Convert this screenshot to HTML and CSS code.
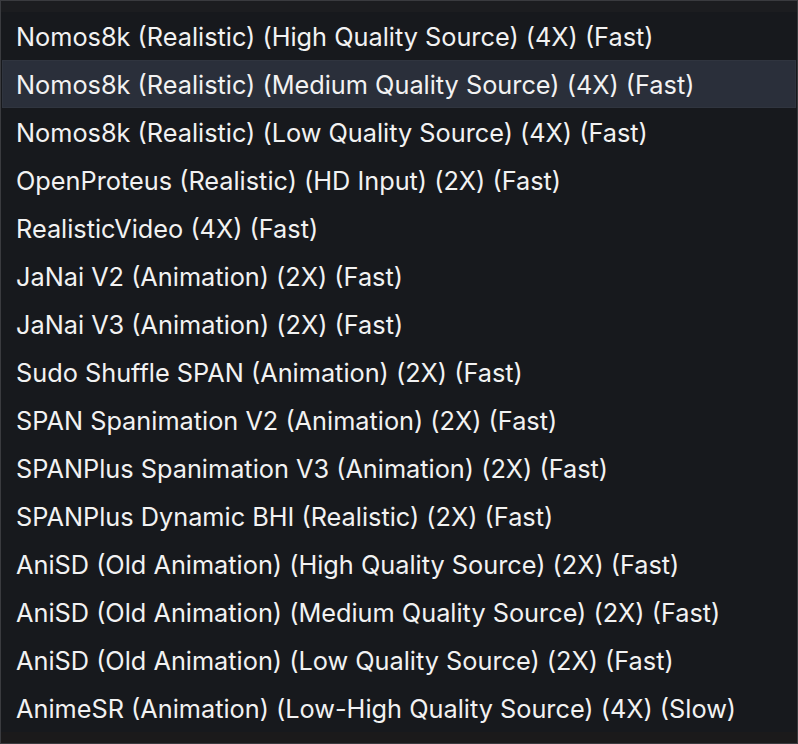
FILE: index.html
```html
<!DOCTYPE html>
<html>
<head>
<meta charset="utf-8">
<link rel="stylesheet" href="styles.css">
</head>
<body>
<div class="menu">
  <div class="pad-top"></div>
  <ul class="list">
    <li class="item">Nomos8k (Realistic) (High Quality Source) (4X) (Fast)</li>
    <li class="item active">Nomos8k (Realistic) (Medium Quality Source) (4X) (Fast)</li>
    <li class="item">Nomos8k (Realistic) (Low Quality Source) (4X) (Fast)</li>
    <li class="item">OpenProteus (Realistic) (HD Input) (2X) (Fast)</li>
    <li class="item">RealisticVideo (4X) (Fast)</li>
    <li class="item">JaNai V2 (Animation) (2X) (Fast)</li>
    <li class="item">JaNai V3 (Animation) (2X) (Fast)</li>
    <li class="item">Sudo Shuffle SPAN (Animation) (2X) (Fast)</li>
    <li class="item">SPAN Spanimation V2 (Animation) (2X) (Fast)</li>
    <li class="item">SPANPlus Spanimation V3 (Animation) (2X) (Fast)</li>
    <li class="item">SPANPlus Dynamic BHI (Realistic) (2X) (Fast)</li>
    <li class="item">AniSD (Old Animation) (High Quality Source) (2X) (Fast)</li>
    <li class="item">AniSD (Old Animation) (Medium Quality Source) (2X) (Fast)</li>
    <li class="item">AniSD (Old Animation) (Low Quality Source) (2X) (Fast)</li>
    <li class="item">AnimeSR (Animation) (Low-High Quality Source) (4X) (Slow)</li>
  </ul>
  <div class="pad-bottom"></div>
</div>
</body>
</html>
```
FILE: styles.css
```css
html, body {
  margin: 0;
  padding: 0;
  background: #17191d;
}
.menu {
  width: 798px;
  height: 744px;
  box-sizing: border-box;
  border: 1px solid #3a3b3f;
  background: #17191d;
  display: flex;
  flex-direction: column;
  font-family: Inter, "Noto Sans", sans-serif;
  color: #f2f2f2;
}
.pad-top {
  height: 11px;
  background: #1c1d20;
}
.list {
  list-style: none;
  margin: 0;
  padding: 0;
}
.item {
  height: 48px;
  display: flex;
  align-items: center;
  padding-left: 15px;
  font-size: 25.3px;
  white-space: nowrap;
}
.item.active {
  background: #2a2f3a;
  margin: 0 1px;
  padding-left: 14px;
  box-shadow: inset 0 0 0 1px #30353f;
}
.pad-bottom {
  flex: 1;
  background: #1b1a1b;
}
```
